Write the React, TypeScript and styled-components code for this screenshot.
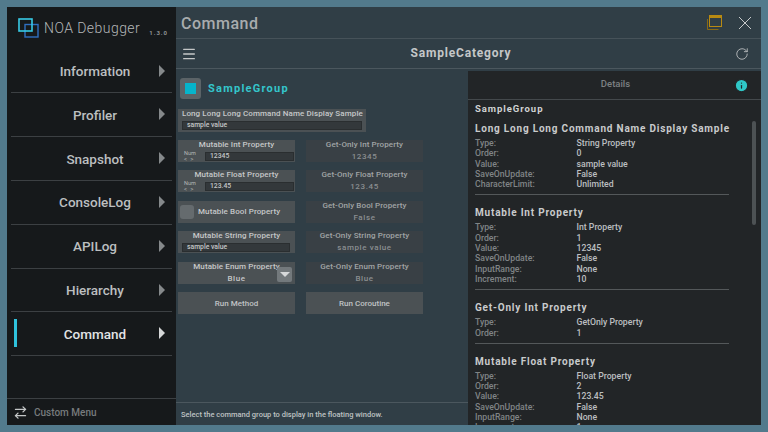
import styled, { createGlobalStyle } from "styled-components";
import { ArrowRightLeft, Info, Menu, RotateCw } from "lucide-react";

const menuItems = ["Information", "Profiler", "Snapshot", "ConsoleLog", "APILog", "Hierarchy", "Command"];

const details = [
  {
    title: "Long Long Long Command Name Display Sample",
    rows: [
      ["Type:", "String Property"],
      ["Order:", "0"],
      ["Value:", "sample value"],
      ["SaveOnUpdate:", "False"],
      ["CharacterLimit:", "Unlimited"],
    ],
  },
  {
    title: "Mutable Int Property",
    rows: [
      ["Type:", "Int Property"],
      ["Order:", "1"],
      ["Value:", "12345"],
      ["SaveOnUpdate:", "False"],
      ["InputRange:", "None"],
      ["Increment:", "10"],
    ],
  },
  {
    title: "Get-Only Int Property",
    rows: [
      ["Type:", "GetOnly Property"],
      ["Order:", "1"],
    ],
  },
  {
    title: "Mutable Float Property",
    rows: [
      ["Type:", "Float Property"],
      ["Order:", "2"],
      ["Value:", "123.45"],
      ["SaveOnUpdate:", "False"],
      ["InputRange:", "None"],
      ["Increment:", "1"],
    ],
  },
];

const GlobalStyle = createGlobalStyle`
  html, body {
    margin: 0;
    padding: 0;
    background: #527a8c;
  }
  * {
    box-sizing: border-box;
  }
`;

const Screen = styled.div`
  width: 768px;
  height: 432px;
  padding: 7px;
  background: #527a8c;
  font-family: Roboto, sans-serif;
  overflow: hidden;
`;

const Frame = styled.div`
  display: flex;
  width: 100%;
  height: 100%;
  background: #303e46;
  overflow: hidden;
`;

const Sidebar = styled.nav`
  display: flex;
  flex-direction: column;
  width: 169px;
  flex-shrink: 0;
  background: #16191b;
`;

const Brand = styled.div`
  display: flex;
  align-items: center;
  height: 42.6px;
  padding: 0 0 1px 11px;
  white-space: nowrap;
`;

const BrandName = styled.span`
  margin-left: 5px;
  font-size: 14px;
  font-weight: 300;
  letter-spacing: 0.45px;
  color: #b4b7b9;
`;

const BrandVersion = styled.span`
  margin: 9px 0 0 9px;
  font-size: 6px;
  font-weight: 700;
  letter-spacing: 1px;
  color: #8f9394;
`;

const MenuList = styled.div`
  display: flex;
  flex-direction: column;
  flex: 1;
  padding: 0 4px;
`;

const MenuRow = styled.div<{ $active?: boolean }>`
  position: relative;
  display: flex;
  align-items: center;
  justify-content: center;
  height: 43.8px;
  border-bottom: 1.5px solid #3c4043;
  font-size: 13.5px;
  font-weight: 500;
  color: ${(p) => (p.$active ? "#e2e4e5" : "#bcbfc0")};
`;

const MenuLabel = styled.span`
  margin-left: 7px;
`;

const Arrow = styled.span<{ $active?: boolean }>`
  position: absolute;
  right: 7px;
  top: 15px;
  width: 0;
  height: 0;
  border-style: solid;
  border-width: 6px 0 6px 6px;
  border-color: transparent transparent transparent ${(p) => (p.$active ? "#d5d7d8" : "#85898b")};
`;

const ActiveMark = styled.span`
  position: absolute;
  left: 3px;
  top: 7px;
  width: 3px;
  height: 28px;
  background: #2fc2dc;
`;

const SideFooter = styled.div`
  display: flex;
  align-items: center;
  gap: 6px;
  height: 27px;
  padding-left: 6px;
  border-top: 1.5px solid #3c4043;
  font-size: 10px;
  font-weight: 500;
  color: #777b7d;
`;

const Main = styled.main`
  display: flex;
  flex-direction: column;
  flex: 1;
  min-width: 0;
`;

const TitleBar = styled.header`
  display: flex;
  align-items: center;
  height: 32px;
  padding: 0 9px 0 5px;
  border-bottom: 1.5px solid #465259;
`;

const Title = styled.h1`
  flex: 1;
  margin: 1px 0 0;
  font-size: 16px;
  font-weight: 500;
  letter-spacing: 0.5px;
  color: #a8acae;
`;

const WindowIcon = styled.svg`
  width: 15px;
  height: 15px;
  margin-right: 16px;
`;

const CloseIcon = styled.svg`
  width: 14px;
  height: 14px;
`;

const Toolbar = styled.div`
  display: flex;
  align-items: center;
  height: 30px;
  padding: 0 12px 0 5px;
  border-bottom: 1.5px solid #4b575e;
`;

const ToolbarTitle = styled.div`
  flex: 1;
  margin-bottom: 1px;
  padding-right: 10px;
  text-align: center;
  font-size: 12px;
  font-weight: 700;
  letter-spacing: 0.8px;
  color: #c4c7c8;
`;

const Body = styled.div`
  display: flex;
  flex: 1;
  min-height: 0;
  padding-top: 2px;
`;

const LeftPane = styled.section`
  display: flex;
  flex-direction: column;
  width: 292px;
  flex-shrink: 0;
`;

const CommandArea = styled.div`
  flex: 1;
  padding: 6px 0 0 2px;
`;

const GroupRow = styled.div`
  display: flex;
  align-items: center;
  height: 22px;
  margin-bottom: 10px;
  padding-left: 2px;
`;

const GroupToggle = styled.div`
  display: flex;
  align-items: center;
  justify-content: center;
  width: 21px;
  height: 21px;
  border-radius: 3px;
  background: #5b6367;
`;

const GroupCheck = styled.div`
  width: 11px;
  height: 11px;
  background: #06b4cb;
`;

const GroupName = styled.span`
  margin-left: 7px;
  font-size: 11px;
  font-weight: 700;
  letter-spacing: 1.25px;
  color: #34c6cc;
`;

const WideCell = styled.div`
  width: 188px;
  height: 23px;
  margin-bottom: 8px;
  padding: 0 4px;
  background: #4b5154;
  color: #c6c8c9;
`;

const Grid = styled.div`
  display: grid;
  grid-template-columns: 117px 117px;
  grid-auto-rows: 22px;
  column-gap: 11px;
  row-gap: 8.4px;
`;

const Cell = styled.div<{ $readonly?: boolean }>`
  position: relative;
  display: flex;
  flex-direction: column;
  align-items: center;
  background: ${(p) => (p.$readonly ? "#394045" : "#4b5154")};
  color: ${(p) => (p.$readonly ? "#a1a5a6" : "#c6c8c9")};
`;

const Label = styled.div`
  font-size: 8px;
  font-weight: 500;
  line-height: 10px;
  white-space: nowrap;
  letter-spacing: 0.1px;
`;

const ReadValue = styled.div<{ $strong?: boolean }>`
  font-size: 8px;
  font-weight: 500;
  line-height: 14px;
  letter-spacing: 0.6px;
  color: ${(p) => (p.$strong ? "#c6c8c9" : "#8b8f91")};
`;

const InputBox = styled.div`
  flex: 1;
  height: 9px;
  padding-left: 4px;
  background: #33383b;
  border: 1px solid #2a2e30;
  font-size: 6.8px;
  font-weight: 500;
  line-height: 7px;
  color: #c4c6c7;
`;

const NumberRow = styled.div`
  display: flex;
  align-items: center;
  align-self: stretch;
  padding: 0 1px 0 6px;
`;

const NumHint = styled.div`
  display: flex;
  flex-direction: column;
  width: 21px;
  font-size: 5.5px;
  line-height: 6px;
  color: #b4b7b8;
`;

const NumArrows = styled.span`
  font-size: 6px;
  line-height: 6px;
  letter-spacing: 0.8px;
`;

const StringRow = styled.div<{ $inset?: boolean }>`
  display: flex;
  align-self: stretch;
  margin-top: 2px;
  padding: ${(p) => (p.$inset ? "0 5px 0 4px" : "0")};
`;

const BoolCell = styled(Cell)`
  flex-direction: row;
  padding-left: 2px;
`;

const BoolBox = styled.div`
  width: 14px;
  height: 14px;
  margin-right: 4px;
  border-radius: 3px;
  background: #656b6e;
`;

const EnumButton = styled.div`
  position: absolute;
  right: 3px;
  top: 5px;
  display: flex;
  align-items: center;
  justify-content: center;
  width: 15px;
  height: 15px;
  border-radius: 2px;
  background: #73797c;

  &::after {
    content: "";
    border-style: solid;
    border-width: 5px 5px 0 5px;
    border-color: #d6d8d9 transparent transparent transparent;
  }
`;

const RunButton = styled.div`
  display: flex;
  align-items: center;
  justify-content: center;
  padding-top: 1px;
  background: #4b5154;
  font-size: 8px;
  font-weight: 500;
  color: #c0c3c4;
`;

const PaneFooter = styled.div`
  display: flex;
  align-items: center;
  height: 23px;
  padding-left: 5px;
  border-top: 1.5px solid #4b575e;
  font-size: 7.5px;
  font-weight: 500;
  color: #bfc2c3;
`;

const DetailsPanel = styled.aside`
  position: relative;
  display: flex;
  flex-direction: column;
  flex: 1;
  min-width: 0;
  background: #222527;
  overflow: hidden;
`;

const DetailsHead = styled.div`
  display: flex;
  align-items: center;
  flex-shrink: 0;
  height: 29px;
  padding: 0 12px 0 0;
  border-bottom: 1.5px solid #44494c;
`;

const DetailsHeading = styled.div`
  flex: 1;
  margin-bottom: 4px;
  padding-left: 29px;
  text-align: center;
  font-size: 9.5px;
  font-weight: 500;
  color: #7d8183;
`;

const DetailsBody = styled.div`
  padding: 3px 0 0 7px;
  width: 261px;
`;

const GroupHeading = styled.div`
  margin-bottom: 9px;
  font-size: 9.5px;
  font-weight: 700;
  line-height: 11px;
  letter-spacing: 0.95px;
  color: #d0d2d3;
`;

const Section = styled.div`
  padding-bottom: 5px;
  margin-bottom: 12px;
  border-bottom: 1px solid #54585a;
`;

const SectionTitle = styled.div`
  margin-bottom: 3px;
  font-size: 10px;
  font-weight: 700;
  line-height: 12px;
  letter-spacing: 0.8px;
  white-space: nowrap;
  color: #c9cbcc;
`;

const DetailRow = styled.div`
  display: flex;
  height: 10.3px;
  font-size: 8.7px;
  font-weight: 500;
  line-height: 10.3px;
`;

const RowKey = styled.span`
  width: 101.5px;
  color: #808486;
`;

const RowValue = styled.span`
  color: #bcbfc0;
`;

const ScrollThumb = styled.div`
  position: absolute;
  left: 284px;
  top: 50px;
  width: 4px;
  height: 104px;
  border-radius: 2px;
  background: #4d5254;
`;

function Logo() {
  return (
    <svg width="21" height="20" viewBox="0 0 21 20" fill="none">
      <rect x="7" y="6.5" width="13" height="12.5" stroke="#2f6fc0" strokeWidth="1.4" />
      <rect x="1" y="1" width="13" height="12" stroke="#38cbe6" strokeWidth="1.6" />
    </svg>
  );
}

function Field({ name, value }: { name: string; value: string }) {
  return (
    <Cell>
      <Label>{name}</Label>
      <NumberRow>
        <NumHint>
          Num
          <NumArrows>{"< >"}</NumArrows>
        </NumHint>
        <InputBox>{value}</InputBox>
      </NumberRow>
    </Cell>
  );
}

function ReadOnly({ name, value }: { name: string; value: string }) {
  return (
    <Cell $readonly>
      <Label>{name}</Label>
      <ReadValue>{value}</ReadValue>
    </Cell>
  );
}

export default function App() {
  return (
    <>
      <GlobalStyle />
      <Screen>
        <Frame>
          <Sidebar>
            <Brand>
              <Logo />
              <BrandName>NOA Debugger</BrandName>
              <BrandVersion>1.3.0</BrandVersion>
            </Brand>
            <MenuList>
              {menuItems.map((item) => (
                <MenuRow key={item} $active={item === "Command"}>
                  {item === "Command" && <ActiveMark />}
                  <MenuLabel>{item}</MenuLabel>
                  <Arrow $active={item === "Command"} />
                </MenuRow>
              ))}
            </MenuList>
            <SideFooter>
              <ArrowRightLeft size={15} color="#c4c7c8" strokeWidth={2.2} />
              Custom Menu
            </SideFooter>
          </Sidebar>
          <Main>
            <TitleBar>
              <Title>Command</Title>
              <WindowIcon viewBox="0 0 15 15" fill="none">
                <path d="M0.5 4v10.5h11" stroke="#8a6a14" strokeWidth="1" />
                <rect x="2.5" y="0.5" width="12" height="11" stroke="#b88a12" strokeWidth="1" />
                <rect x="2.5" y="0" width="12" height="3" fill="#b88a12" />
              </WindowIcon>
              <CloseIcon viewBox="0 0 14 14" fill="none">
                <path d="M1 1l12 12M13 1L1 13" stroke="#c8cacb" strokeWidth="1" />
              </CloseIcon>
            </TitleBar>
            <Toolbar>
              <Menu size={16} color="#c4c7c8" />
              <ToolbarTitle>SampleCategory</ToolbarTitle>
              <RotateCw size={14} color="#c4c7c8" strokeWidth={1.4} />
            </Toolbar>
            <Body>
              <LeftPane>
                <CommandArea>
                  <GroupRow>
                    <GroupToggle>
                      <GroupCheck />
                    </GroupToggle>
                    <GroupName>SampleGroup</GroupName>
                  </GroupRow>
                  <WideCell>
                    <Label>Long Long Long Command Name Display Sample</Label>
                    <StringRow>
                      <InputBox>sample value</InputBox>
                    </StringRow>
                  </WideCell>
                  <Grid>
                    <Field name="Mutable Int Property" value="12345" />
                    <ReadOnly name="Get-Only Int Property" value="12345" />
                    <Field name="Mutable Float Property" value="123.45" />
                    <ReadOnly name="Get-Only Float Property" value="123.45" />
                    <BoolCell>
                      <BoolBox />
                      <Label>Mutable Bool Property</Label>
                    </BoolCell>
                    <ReadOnly name="Get-Only Bool Property" value="False" />
                    <Cell>
                      <Label>Mutable String Property</Label>
                      <StringRow $inset>
                        <InputBox>sample value</InputBox>
                      </StringRow>
                    </Cell>
                    <ReadOnly name="Get-Only String Property" value="sample value" />
                    <Cell>
                      <Label>Mutable Enum Property</Label>
                      <ReadValue $strong>Blue</ReadValue>
                      <EnumButton />
                    </Cell>
                    <ReadOnly name="Get-Only Enum Property" value="Blue" />
                    <RunButton>Run Method</RunButton>
                    <RunButton>Run Coroutine</RunButton>
                  </Grid>
                </CommandArea>
                <PaneFooter>Select the command group to display in the floating window.</PaneFooter>
              </LeftPane>
              <DetailsPanel>
                <DetailsHead>
                  <DetailsHeading>Details</DetailsHeading>
                  <Info size={15} color="#222527" fill="#2fc7c7" strokeWidth={2} />
                </DetailsHead>
                <DetailsBody>
                  <GroupHeading>SampleGroup</GroupHeading>
                  {details.map((section) => (
                    <Section key={section.title}>
                      <SectionTitle>{section.title}</SectionTitle>
                      {section.rows.map(([key, value]) => (
                        <DetailRow key={key}>
                          <RowKey>{key}</RowKey>
                          <RowValue>{value}</RowValue>
                        </DetailRow>
                      ))}
                    </Section>
                  ))}
                </DetailsBody>
                <ScrollThumb />
              </DetailsPanel>
            </Body>
          </Main>
        </Frame>
      </Screen>
    </>
  );
}
